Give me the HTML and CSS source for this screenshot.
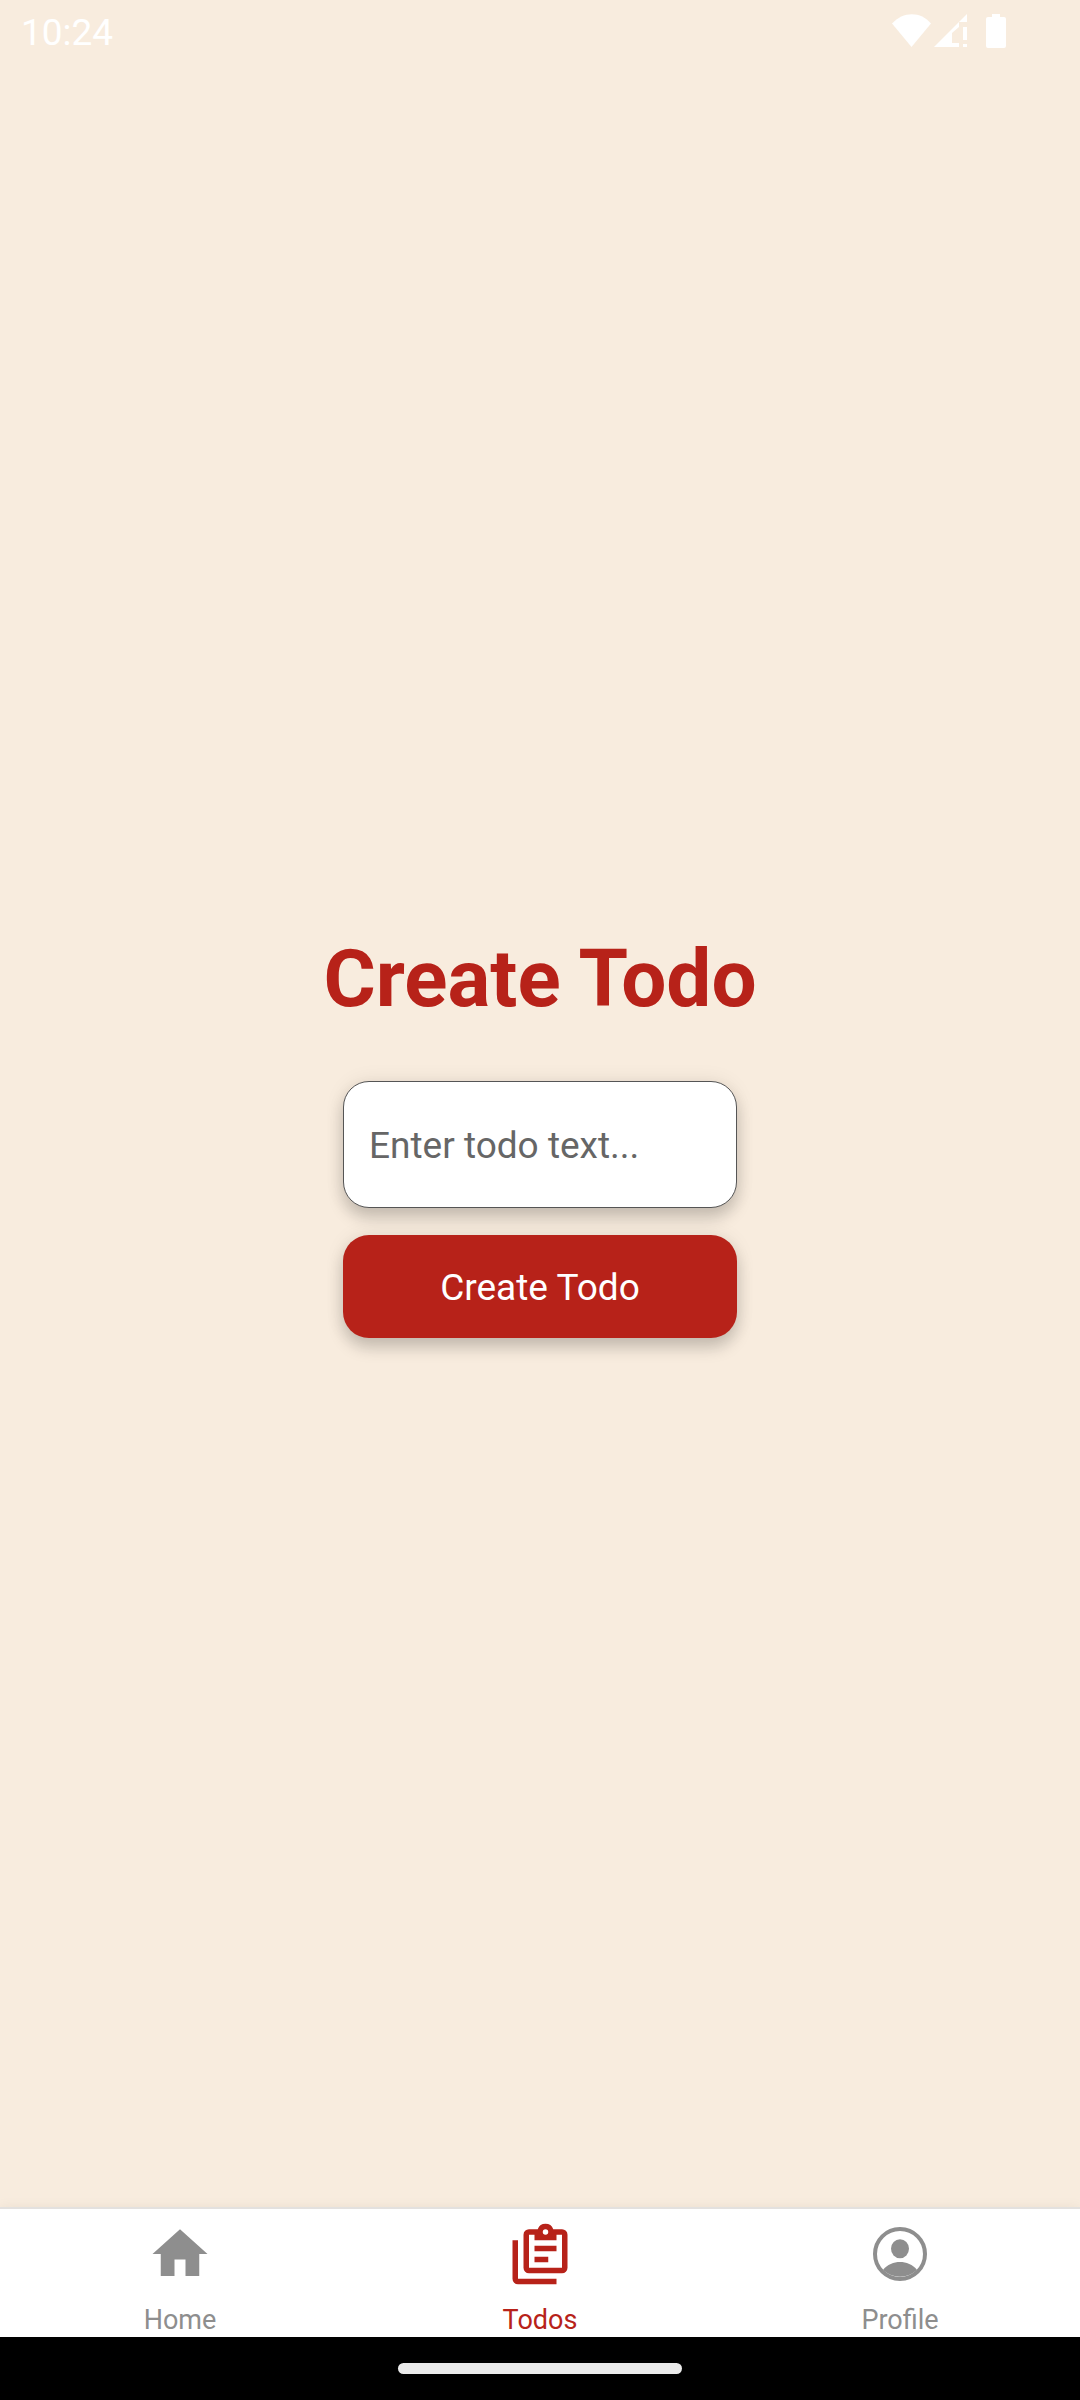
FILE: index.html
```html
<!DOCTYPE html>
<html lang="en">
<head>
<meta charset="utf-8">
<meta name="viewport" content="width=device-width, initial-scale=1">
<title>Create Todo</title>
<link rel="stylesheet" href="styles.css">
</head>
<body>
<header class="status-bar">
  <time class="clock">10:24</time>
  <div class="status-icons">
    <svg class="wifi" viewBox="0 0 40 34" aria-hidden="true"><path d="M0 9.500C11-3 29-3 39 9.500L19.500 33z"/></svg>
    <svg class="signal" viewBox="0 0 34 34" aria-hidden="true"><path d="M33 0v8h-8v5l-7 6v10h7v4H0zM29 13h4v13h-4zM29 30h4v3h-4z"/></svg>
    <svg class="battery" viewBox="0 0 20 34" aria-hidden="true"><path d="M6 0h8v3h4a2 2 0 0 1 2 2v27a2 2 0 0 1-2 2H2a2 2 0 0 1-2-2V5a2 2 0 0 1 2-2h4z"/></svg>
  </div>
</header>
<main class="screen">
  <h1 class="title">Create Todo</h1>
  <form class="todo-form">
    <input class="field" type="text" placeholder="Enter todo text..." aria-label="Todo text">
    <button class="submit" type="button">Create Todo</button>
  </form>
</main>
<nav class="tabs">
  <a class="tab" href="#home">
    <svg class="tab-icon" viewBox="0 0 24 24" aria-hidden="true"><path d="M10 20v-6h4v6h5v-8h3L12 3 2 12h3v8z"/></svg>
    <span>Home</span>
  </a>
  <a class="tab active" href="#todos" aria-current="page">
    <svg class="tab-icon" viewBox="0 0 24 24" aria-hidden="true"><path fill-rule="evenodd" d="M4 7v14h14v2H4a2 2 0 0 1-2-2V7zM20 3h-3.180a3 3 0 0 0-5.640 0H8a2 2 0 0 0-2 2v12a2 2 0 0 0 2 2h12a2 2 0 0 0 2-2V5a2 2 0 0 0-2-2zM14 3a1 1 0 1 1 0 2 1 1 0 0 1 0-2zM8 5h2v2h8V5h2v12H8zM10 9h8v2h-8zM10 13h5v2h-5z"/></svg>
    <span>Todos</span>
  </a>
  <a class="tab" href="#profile">
    <svg class="tab-icon" viewBox="0 0 66 66" aria-hidden="true"><circle class="ring" cx="33" cy="33" r="25"/><ellipse cx="33" cy="27.700" rx="9" ry="9.500"/><path d="M16 49C20 43.500 27 41 33 41s13 2.500 17 8a25 25 0 0 1-34 0z"/></svg>
    <span>Profile</span>
  </a>
</nav>
<footer class="gesture-bar"><div class="handle"></div></footer>
</body>
</html>
```

FILE: styles.css
```css
* {
  box-sizing: border-box;
}

body {
  display: flex;
  flex-direction: column;
  min-height: 100vh;
  margin: 0;
  background: #f8ecde;
  font-family: Roboto, sans-serif;
}

.status-bar {
  display: flex;
  align-items: flex-start;
  justify-content: space-between;
  height: 63px;
  padding: 14px 74px 0 21px;
  color: #fff;
}

.clock {
  font-size: 37px;
  line-height: 38px;
}

.status-icons {
  display: flex;
  gap: 2px;
  fill: #fff;
}

.wifi {
  width: 40px;
  height: 34px;
}

.signal {
  width: 34px;
  height: 34px;
}

.battery {
  width: 20px;
  height: 34px;
  margin-left: 16px;
}

.screen {
  display: flex;
  flex: 1;
  flex-direction: column;
  align-items: center;
  justify-content: center;
  gap: 56px;
}

.title {
  margin: 0;
  color: #b72219;
  font-size: 80px;
  font-weight: 700;
  line-height: 92px;
}

.todo-form {
  display: flex;
  flex-direction: column;
  gap: 27px;
  width: 394px;
}

.field,
.submit {
  border-radius: 26px;
  box-shadow: 0 10px 16px rgba(0, 0, 0, 0.18), 0 0 20px rgba(0, 0, 0, 0.08);
  font-family: inherit;
  font-size: 37px;
  line-height: 43px;
}

.field {
  width: 100%;
  padding: 42px 25px 40px;
  border: 1px solid #555;
  background: #fff;
  color: #222;
}

.field::placeholder {
  color: #666;
  opacity: 1;
}

.submit {
  padding: 31px 30px 29px;
  border: 0;
  background: #b72219;
  color: #fff;
}

.tabs {
  display: flex;
  border-top: 2px solid #e3e1df;
  background: #fff;
  box-shadow: 0 0 12px rgba(0, 0, 0, 0.06);
}

.tab {
  display: flex;
  flex: 1;
  flex-direction: column;
  align-items: center;
  gap: 16px;
  padding-top: 12px;
  color: #8e8e8e;
  font-size: 27px;
  line-height: 34px;
  text-decoration: none;
}

.tab.active {
  color: #b72219;
}

.tab-icon {
  width: 66px;
  height: 66px;
  fill: currentColor;
}

.ring {
  fill: none;
  stroke: currentColor;
  stroke-width: 4px;
}

.gesture-bar {
  display: flex;
  align-items: center;
  justify-content: center;
  height: 63px;
  background: #000;
}

.handle {
  width: 284px;
  height: 11px;
  border-radius: 6px;
  background: #ebebeb;
}
```
